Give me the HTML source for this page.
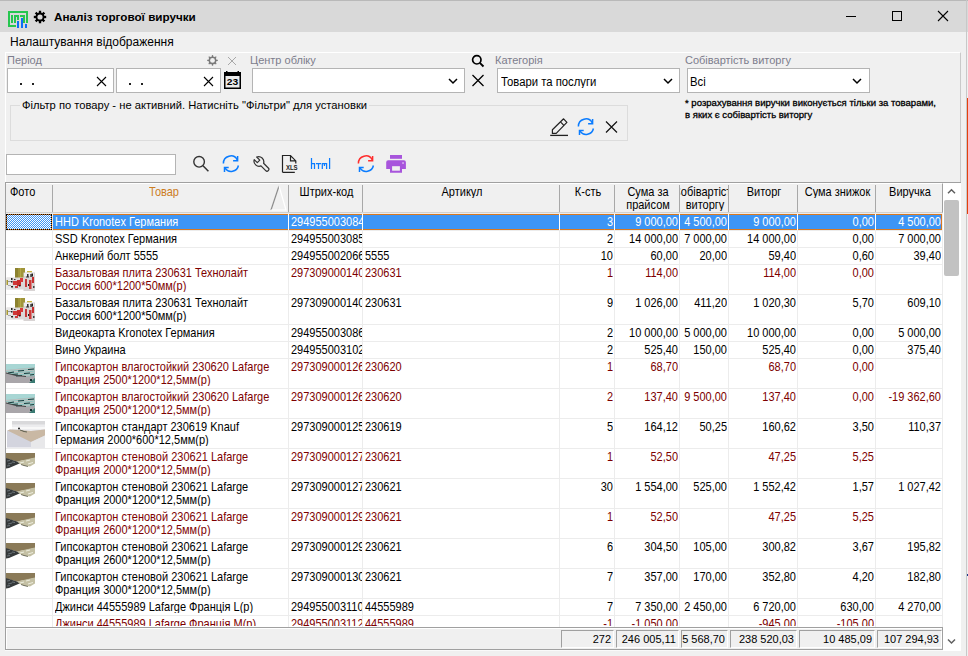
<!DOCTYPE html>
<html><head><meta charset="utf-8">
<style>
*{box-sizing:border-box;margin:0;padding:0}
html,body{width:968px;height:656px;overflow:hidden;background:#f0f0f0;font-family:"Liberation Sans",sans-serif;color:#000;position:relative}
.a{position:absolute}
.t{position:absolute;white-space:nowrap}
#title{left:0;top:0;width:968px;height:32px;background:#d9d9d9;border-top:1px solid #b9b9b9}
.lbl{font-size:11px;color:#7d7d8c}
.inp{position:absolute;background:#fff;border:1px solid #b4b4b4}
.g{font-size:11px;line-height:13px}
.c{position:absolute;overflow:hidden;white-space:nowrap;font-size:11px;line-height:13px}
.rt{text-align:right}
.red{color:#8b0000}
</style></head><body>

<div id="title" class="a"></div>
<div class="t" style="left:54px;top:10px;font-weight:bold;font-size:11.7px">Аналіз торгової виручки</div>
<div class="t" style="left:10px;top:35px;font-size:12px">Налаштування відображення</div>
<div class="a" style="left:5px;top:52px;width:956px;height:131px;border-left:1px solid #fff;border-top:1px solid #fff;border-right:1px solid #c9c9c9"></div>
<div class="t lbl" style="left:7px;top:54px">Період</div>
<div class="inp" style="left:7px;top:68px;width:107px;height:25px"></div>
<div class="inp" style="left:116px;top:68px;width:105px;height:25px"></div>
<div class="t lbl" style="left:250px;top:54px">Центр обліку</div>
<div class="inp" style="left:252px;top:68px;width:213px;height:25px"></div>
<div class="t lbl" style="left:495px;top:54px">Категорія</div>
<div class="inp" style="left:497px;top:68px;width:183px;height:25px"></div>
<div class="t" style="left:501px;top:75px;font-size:11.3px;transform:scaleY(1.08);transform-origin:0 0">Товари та послуги</div>
<div class="t lbl" style="left:685px;top:54px">Собівартість виторгу</div>
<div class="inp" style="left:687px;top:68px;width:183px;height:25px"></div>
<div class="t" style="left:690px;top:75px;font-size:11.3px;transform:scaleY(1.08);transform-origin:0 0">Всі</div>
<div class="t" style="left:685px;top:97px;font-size:9.55px;line-height:12px;color:#000;-webkit-text-stroke:0.3px #000">* розрахування виручки виконується тільки за товарами,<br>в яких є собівартість виторгу</div>
<div class="a" style="left:10px;top:105px;width:618px;height:36px;border:1px solid #dcdcdc"></div>
<div class="t" style="left:20px;top:99px;font-size:11.2px;background:#f0f0f0;padding:0 2px">Фільтр по товару - не активний. Натисніть "Фільтри" для установки</div>
<div class="inp" style="left:6px;top:154px;width:170px;height:21px"></div>
<div class="a" style="left:5px;top:182px;width:956px;height:469px;background:#fff"></div>
<div class="a" style="left:5px;top:182px;width:956px;height:1px;background:#a0a0a0"></div>
<div class="a" style="left:5px;top:182px;width:1px;height:468px;background:#a0a0a0"></div>
<div class="a" style="left:6px;top:183px;width:937px;height:30px;background:#f0f0f0;border-top:1px solid #fff;border-bottom:1px solid #d0d0d0;border-right:1px solid #a0a0a0"></div>
<div class="a" style="left:52px;top:185px;width:1px;height:27px;background:#a8a8a8"></div>
<div class="a" style="left:288px;top:185px;width:1px;height:27px;background:#a8a8a8"></div>
<div class="a" style="left:362px;top:185px;width:1px;height:27px;background:#a8a8a8"></div>
<div class="a" style="left:559px;top:185px;width:1px;height:27px;background:#a8a8a8"></div>
<div class="a" style="left:614px;top:185px;width:1px;height:27px;background:#a8a8a8"></div>
<div class="a" style="left:679px;top:185px;width:1px;height:27px;background:#a8a8a8"></div>
<div class="a" style="left:728px;top:185px;width:1px;height:27px;background:#a8a8a8"></div>
<div class="a" style="left:797px;top:185px;width:1px;height:27px;background:#a8a8a8"></div>
<div class="a" style="left:875px;top:185px;width:1px;height:27px;background:#a8a8a8"></div>
<div class="c" style="left:6px;top:185px;width:46px;height:27px;line-height:12px;text-align:left;padding-left:4px;transform:scaleY(1.08);transform-origin:0 0">Фото</div>
<div class="c" style="left:53px;top:184px;width:220px;height:28px;line-height:12px;color:#cc7d1f"><div style="position:absolute;top:1px;left:11.0px;width:200px;text-align:center;transform:scaleY(1.08);transform-origin:0 0">Товар</div></div>
<div class="c" style="left:289px;top:184px;width:73px;height:28px;line-height:12px"><div style="position:absolute;top:1px;left:-62.5px;width:200px;text-align:center;transform:scaleY(1.08);transform-origin:0 0">Штрих-код</div></div>
<div class="c" style="left:363px;top:184px;width:196px;height:28px;line-height:12px"><div style="position:absolute;top:1px;left:-1.0px;width:200px;text-align:center;transform:scaleY(1.08);transform-origin:0 0">Артикул</div></div>
<div class="c" style="left:560px;top:184px;width:54px;height:28px;line-height:12px"><div style="position:absolute;top:1px;left:-72.0px;width:200px;text-align:center;transform:scaleY(1.08);transform-origin:0 0">К-сть</div></div>
<div class="c" style="left:615px;top:184px;width:64px;height:28px;line-height:12px"><div style="position:absolute;top:1px;left:-67.0px;width:200px;text-align:center;transform:scaleY(1.08);transform-origin:0 0">Сума за<br>прайсом</div></div>
<div class="c" style="left:680px;top:184px;width:48px;height:28px;line-height:12px"><div style="position:absolute;top:1px;left:-75.0px;width:200px;text-align:center;transform:scaleY(1.08);transform-origin:0 0">Собівартість<br>виторгу</div></div>
<div class="c" style="left:729px;top:184px;width:68px;height:28px;line-height:12px"><div style="position:absolute;top:1px;left:-65.0px;width:200px;text-align:center;transform:scaleY(1.08);transform-origin:0 0">Виторг</div></div>
<div class="c" style="left:798px;top:184px;width:77px;height:28px;line-height:12px"><div style="position:absolute;top:1px;left:-60.5px;width:200px;text-align:center;transform:scaleY(1.08);transform-origin:0 0">Сума знижок</div></div>
<div class="c" style="left:876px;top:184px;width:66px;height:28px;line-height:12px"><div style="position:absolute;top:1px;left:-66.0px;width:200px;text-align:center;transform:scaleY(1.08);transform-origin:0 0">Виручка</div></div>
<svg class="a" style="left:268px;top:184px" width="20" height="28"><path d="M3 26 L11 2" stroke="#8c8c8c" stroke-width="1.2" fill="none"/><path d="M11 2 L18 26 L3 26" stroke="#fff" stroke-width="1.2" fill="none"/></svg>
<div class="a" style="left:52px;top:213px;width:1px;height:414px;background:#ececec"></div>
<div class="a" style="left:288px;top:213px;width:1px;height:414px;background:#ececec"></div>
<div class="a" style="left:362px;top:213px;width:1px;height:414px;background:#ececec"></div>
<div class="a" style="left:559px;top:213px;width:1px;height:414px;background:#ececec"></div>
<div class="a" style="left:614px;top:213px;width:1px;height:414px;background:#ececec"></div>
<div class="a" style="left:679px;top:213px;width:1px;height:414px;background:#ececec"></div>
<div class="a" style="left:728px;top:213px;width:1px;height:414px;background:#ececec"></div>
<div class="a" style="left:797px;top:213px;width:1px;height:414px;background:#ececec"></div>
<div class="a" style="left:875px;top:213px;width:1px;height:414px;background:#ececec"></div>
<div class="a" style="left:942px;top:213px;width:1px;height:414px;background:#ececec"></div>
<div class="a" style="left:6px;top:213px;width:936px;height:1px;background:#ececec"></div>
<div class="a" style="left:53px;top:214px;width:889px;height:16px;background:#3d95f5;border-top:1px solid #d9781e;border-bottom:1px solid #d9781e;border-right:1px solid #d9781e"></div>
<div class="a" style="left:288px;top:214px;width:1px;height:16px;background:#fff"></div>
<div class="a" style="left:362px;top:214px;width:1px;height:16px;background:#fff"></div>
<div class="a" style="left:559px;top:214px;width:1px;height:16px;background:#fff"></div>
<div class="a" style="left:614px;top:214px;width:1px;height:16px;background:#fff"></div>
<div class="a" style="left:679px;top:214px;width:1px;height:16px;background:#fff"></div>
<div class="a" style="left:728px;top:214px;width:1px;height:16px;background:#fff"></div>
<div class="a" style="left:797px;top:214px;width:1px;height:16px;background:#fff"></div>
<div class="a" style="left:875px;top:214px;width:1px;height:16px;background:#fff"></div>
<div class="a" style="left:6px;top:214px;width:46px;height:16px;background:#d9781e"></div>
<div class="a" style="left:6px;top:214px;width:46px;height:16px;border:1px dotted #000;background:repeating-conic-gradient(#3d95f5 0 25%,#fff 0 50%) 0 0/2px 2px;background-clip:padding-box"></div>
<div class="c " style="left:53px;top:214px;width:235px;height:15px;color:#fff"><div style="position:absolute;left:0;right:0;top:1.3px;line-height:12px;transform:scaleY(1.08);transform-origin:0 0;padding-left:2px">HHD Kronotex Германия</div></div>
<div class="c " style="left:289px;top:214px;width:73px;height:15px;color:#fff"><div style="position:absolute;left:0;right:0;top:1.3px;line-height:12px;transform:scaleY(1.08);transform-origin:0 0;padding-left:2px">294955003084</div></div>
<div class="c rt" style="left:560px;top:214px;width:54px;height:15px;color:#fff"><div style="position:absolute;left:0;right:0;top:1.3px;line-height:12px;transform:scaleY(1.08);transform-origin:0 0;padding-right:1px">3</div></div>
<div class="c rt" style="left:615px;top:214px;width:64px;height:15px;color:#fff"><div style="position:absolute;left:0;right:0;top:1.3px;line-height:12px;transform:scaleY(1.08);transform-origin:0 0;padding-right:1px">9 000,00</div></div>
<div class="c rt" style="left:680px;top:214px;width:48px;height:15px;color:#fff"><div style="position:absolute;left:0;right:0;top:1.3px;line-height:12px;transform:scaleY(1.08);transform-origin:0 0;padding-right:1px">4 500,00</div></div>
<div class="c rt" style="left:729px;top:214px;width:68px;height:15px;color:#fff"><div style="position:absolute;left:0;right:0;top:1.3px;line-height:12px;transform:scaleY(1.08);transform-origin:0 0;padding-right:1px">9 000,00</div></div>
<div class="c rt" style="left:798px;top:214px;width:77px;height:15px;color:#fff"><div style="position:absolute;left:0;right:0;top:1.3px;line-height:12px;transform:scaleY(1.08);transform-origin:0 0;padding-right:1px">0,00</div></div>
<div class="c rt" style="left:876px;top:214px;width:66px;height:15px;color:#fff"><div style="position:absolute;left:0;right:0;top:1.3px;line-height:12px;transform:scaleY(1.08);transform-origin:0 0;padding-right:1px">4 500,00</div></div>
<div class="a" style="left:6px;top:230px;width:936px;height:1px;background:#ececec"></div>
<div class="c " style="left:53px;top:231px;width:235px;height:15px;color:#000"><div style="position:absolute;left:0;right:0;top:1.3px;line-height:12px;transform:scaleY(1.08);transform-origin:0 0;padding-left:2px">SSD Kronotex Германия</div></div>
<div class="c " style="left:289px;top:231px;width:73px;height:15px;color:#000"><div style="position:absolute;left:0;right:0;top:1.3px;line-height:12px;transform:scaleY(1.08);transform-origin:0 0;padding-left:2px">294955003085</div></div>
<div class="c rt" style="left:560px;top:231px;width:54px;height:15px;color:#000"><div style="position:absolute;left:0;right:0;top:1.3px;line-height:12px;transform:scaleY(1.08);transform-origin:0 0;padding-right:1px">2</div></div>
<div class="c rt" style="left:615px;top:231px;width:64px;height:15px;color:#000"><div style="position:absolute;left:0;right:0;top:1.3px;line-height:12px;transform:scaleY(1.08);transform-origin:0 0;padding-right:1px">14 000,00</div></div>
<div class="c rt" style="left:680px;top:231px;width:48px;height:15px;color:#000"><div style="position:absolute;left:0;right:0;top:1.3px;line-height:12px;transform:scaleY(1.08);transform-origin:0 0;padding-right:1px">7 000,00</div></div>
<div class="c rt" style="left:729px;top:231px;width:68px;height:15px;color:#000"><div style="position:absolute;left:0;right:0;top:1.3px;line-height:12px;transform:scaleY(1.08);transform-origin:0 0;padding-right:1px">14 000,00</div></div>
<div class="c rt" style="left:798px;top:231px;width:77px;height:15px;color:#000"><div style="position:absolute;left:0;right:0;top:1.3px;line-height:12px;transform:scaleY(1.08);transform-origin:0 0;padding-right:1px">0,00</div></div>
<div class="c rt" style="left:876px;top:231px;width:66px;height:15px;color:#000"><div style="position:absolute;left:0;right:0;top:1.3px;line-height:12px;transform:scaleY(1.08);transform-origin:0 0;padding-right:1px">7 000,00</div></div>
<div class="a" style="left:6px;top:247px;width:936px;height:1px;background:#ececec"></div>
<div class="c " style="left:53px;top:248px;width:235px;height:15px;color:#000"><div style="position:absolute;left:0;right:0;top:1.3px;line-height:12px;transform:scaleY(1.08);transform-origin:0 0;padding-left:2px">Анкерний болт 5555</div></div>
<div class="c " style="left:289px;top:248px;width:73px;height:15px;color:#000"><div style="position:absolute;left:0;right:0;top:1.3px;line-height:12px;transform:scaleY(1.08);transform-origin:0 0;padding-left:2px">294955002066</div></div>
<div class="c " style="left:363px;top:248px;width:196px;height:15px;color:#000"><div style="position:absolute;left:0;right:0;top:1.3px;line-height:12px;transform:scaleY(1.08);transform-origin:0 0;padding-left:2px">5555</div></div>
<div class="c rt" style="left:560px;top:248px;width:54px;height:15px;color:#000"><div style="position:absolute;left:0;right:0;top:1.3px;line-height:12px;transform:scaleY(1.08);transform-origin:0 0;padding-right:1px">10</div></div>
<div class="c rt" style="left:615px;top:248px;width:64px;height:15px;color:#000"><div style="position:absolute;left:0;right:0;top:1.3px;line-height:12px;transform:scaleY(1.08);transform-origin:0 0;padding-right:1px">60,00</div></div>
<div class="c rt" style="left:680px;top:248px;width:48px;height:15px;color:#000"><div style="position:absolute;left:0;right:0;top:1.3px;line-height:12px;transform:scaleY(1.08);transform-origin:0 0;padding-right:1px">20,00</div></div>
<div class="c rt" style="left:729px;top:248px;width:68px;height:15px;color:#000"><div style="position:absolute;left:0;right:0;top:1.3px;line-height:12px;transform:scaleY(1.08);transform-origin:0 0;padding-right:1px">59,40</div></div>
<div class="c rt" style="left:798px;top:248px;width:77px;height:15px;color:#000"><div style="position:absolute;left:0;right:0;top:1.3px;line-height:12px;transform:scaleY(1.08);transform-origin:0 0;padding-right:1px">0,60</div></div>
<div class="c rt" style="left:876px;top:248px;width:66px;height:15px;color:#000"><div style="position:absolute;left:0;right:0;top:1.3px;line-height:12px;transform:scaleY(1.08);transform-origin:0 0;padding-right:1px">39,40</div></div>
<div class="a" style="left:6px;top:264px;width:936px;height:1px;background:#ececec"></div>
<div class="c " style="left:53px;top:265px;width:235px;height:28px;color:#7d0000"><div style="position:absolute;left:0;right:0;top:1.3px;line-height:12px;transform:scaleY(1.08);transform-origin:0 0;padding-left:2px">Базальтовая плита 230631 Технолайт<br>Россия 600*1200*50мм(р)</div></div>
<div class="c " style="left:289px;top:265px;width:73px;height:28px;color:#7d0000"><div style="position:absolute;left:0;right:0;top:1.3px;line-height:12px;transform:scaleY(1.08);transform-origin:0 0;padding-left:2px">297309000140</div></div>
<div class="c " style="left:363px;top:265px;width:196px;height:28px;color:#7d0000"><div style="position:absolute;left:0;right:0;top:1.3px;line-height:12px;transform:scaleY(1.08);transform-origin:0 0;padding-left:2px">230631</div></div>
<div class="c rt" style="left:560px;top:265px;width:54px;height:28px;color:#7d0000"><div style="position:absolute;left:0;right:0;top:1.3px;line-height:12px;transform:scaleY(1.08);transform-origin:0 0;padding-right:1px">1</div></div>
<div class="c rt" style="left:615px;top:265px;width:64px;height:28px;color:#7d0000"><div style="position:absolute;left:0;right:0;top:1.3px;line-height:12px;transform:scaleY(1.08);transform-origin:0 0;padding-right:1px">114,00</div></div>
<div class="c rt" style="left:729px;top:265px;width:68px;height:28px;color:#7d0000"><div style="position:absolute;left:0;right:0;top:1.3px;line-height:12px;transform:scaleY(1.08);transform-origin:0 0;padding-right:1px">114,00</div></div>
<div class="c rt" style="left:798px;top:265px;width:77px;height:28px;color:#7d0000"><div style="position:absolute;left:0;right:0;top:1.3px;line-height:12px;transform:scaleY(1.08);transform-origin:0 0;padding-right:1px">0,00</div></div>
<div class="a" style="left:6px;top:294px;width:936px;height:1px;background:#ececec"></div>
<div class="c " style="left:53px;top:295px;width:235px;height:28px;color:#000"><div style="position:absolute;left:0;right:0;top:1.3px;line-height:12px;transform:scaleY(1.08);transform-origin:0 0;padding-left:2px">Базальтовая плита 230631 Технолайт<br>Россия 600*1200*50мм(р)</div></div>
<div class="c " style="left:289px;top:295px;width:73px;height:28px;color:#000"><div style="position:absolute;left:0;right:0;top:1.3px;line-height:12px;transform:scaleY(1.08);transform-origin:0 0;padding-left:2px">297309000140</div></div>
<div class="c " style="left:363px;top:295px;width:196px;height:28px;color:#000"><div style="position:absolute;left:0;right:0;top:1.3px;line-height:12px;transform:scaleY(1.08);transform-origin:0 0;padding-left:2px">230631</div></div>
<div class="c rt" style="left:560px;top:295px;width:54px;height:28px;color:#000"><div style="position:absolute;left:0;right:0;top:1.3px;line-height:12px;transform:scaleY(1.08);transform-origin:0 0;padding-right:1px">9</div></div>
<div class="c rt" style="left:615px;top:295px;width:64px;height:28px;color:#000"><div style="position:absolute;left:0;right:0;top:1.3px;line-height:12px;transform:scaleY(1.08);transform-origin:0 0;padding-right:1px">1 026,00</div></div>
<div class="c rt" style="left:680px;top:295px;width:48px;height:28px;color:#000"><div style="position:absolute;left:0;right:0;top:1.3px;line-height:12px;transform:scaleY(1.08);transform-origin:0 0;padding-right:1px">411,20</div></div>
<div class="c rt" style="left:729px;top:295px;width:68px;height:28px;color:#000"><div style="position:absolute;left:0;right:0;top:1.3px;line-height:12px;transform:scaleY(1.08);transform-origin:0 0;padding-right:1px">1 020,30</div></div>
<div class="c rt" style="left:798px;top:295px;width:77px;height:28px;color:#000"><div style="position:absolute;left:0;right:0;top:1.3px;line-height:12px;transform:scaleY(1.08);transform-origin:0 0;padding-right:1px">5,70</div></div>
<div class="c rt" style="left:876px;top:295px;width:66px;height:28px;color:#000"><div style="position:absolute;left:0;right:0;top:1.3px;line-height:12px;transform:scaleY(1.08);transform-origin:0 0;padding-right:1px">609,10</div></div>
<div class="a" style="left:6px;top:324px;width:936px;height:1px;background:#ececec"></div>
<div class="c " style="left:53px;top:325px;width:235px;height:15px;color:#000"><div style="position:absolute;left:0;right:0;top:1.3px;line-height:12px;transform:scaleY(1.08);transform-origin:0 0;padding-left:2px">Видеокарта Kronotex Германия</div></div>
<div class="c " style="left:289px;top:325px;width:73px;height:15px;color:#000"><div style="position:absolute;left:0;right:0;top:1.3px;line-height:12px;transform:scaleY(1.08);transform-origin:0 0;padding-left:2px">294955003086</div></div>
<div class="c rt" style="left:560px;top:325px;width:54px;height:15px;color:#000"><div style="position:absolute;left:0;right:0;top:1.3px;line-height:12px;transform:scaleY(1.08);transform-origin:0 0;padding-right:1px">2</div></div>
<div class="c rt" style="left:615px;top:325px;width:64px;height:15px;color:#000"><div style="position:absolute;left:0;right:0;top:1.3px;line-height:12px;transform:scaleY(1.08);transform-origin:0 0;padding-right:1px">10 000,00</div></div>
<div class="c rt" style="left:680px;top:325px;width:48px;height:15px;color:#000"><div style="position:absolute;left:0;right:0;top:1.3px;line-height:12px;transform:scaleY(1.08);transform-origin:0 0;padding-right:1px">5 000,00</div></div>
<div class="c rt" style="left:729px;top:325px;width:68px;height:15px;color:#000"><div style="position:absolute;left:0;right:0;top:1.3px;line-height:12px;transform:scaleY(1.08);transform-origin:0 0;padding-right:1px">10 000,00</div></div>
<div class="c rt" style="left:798px;top:325px;width:77px;height:15px;color:#000"><div style="position:absolute;left:0;right:0;top:1.3px;line-height:12px;transform:scaleY(1.08);transform-origin:0 0;padding-right:1px">0,00</div></div>
<div class="c rt" style="left:876px;top:325px;width:66px;height:15px;color:#000"><div style="position:absolute;left:0;right:0;top:1.3px;line-height:12px;transform:scaleY(1.08);transform-origin:0 0;padding-right:1px">5 000,00</div></div>
<div class="a" style="left:6px;top:341px;width:936px;height:1px;background:#ececec"></div>
<div class="c " style="left:53px;top:342px;width:235px;height:15px;color:#000"><div style="position:absolute;left:0;right:0;top:1.3px;line-height:12px;transform:scaleY(1.08);transform-origin:0 0;padding-left:2px">Вино Украина</div></div>
<div class="c " style="left:289px;top:342px;width:73px;height:15px;color:#000"><div style="position:absolute;left:0;right:0;top:1.3px;line-height:12px;transform:scaleY(1.08);transform-origin:0 0;padding-left:2px">294955003102</div></div>
<div class="c rt" style="left:560px;top:342px;width:54px;height:15px;color:#000"><div style="position:absolute;left:0;right:0;top:1.3px;line-height:12px;transform:scaleY(1.08);transform-origin:0 0;padding-right:1px">2</div></div>
<div class="c rt" style="left:615px;top:342px;width:64px;height:15px;color:#000"><div style="position:absolute;left:0;right:0;top:1.3px;line-height:12px;transform:scaleY(1.08);transform-origin:0 0;padding-right:1px">525,40</div></div>
<div class="c rt" style="left:680px;top:342px;width:48px;height:15px;color:#000"><div style="position:absolute;left:0;right:0;top:1.3px;line-height:12px;transform:scaleY(1.08);transform-origin:0 0;padding-right:1px">150,00</div></div>
<div class="c rt" style="left:729px;top:342px;width:68px;height:15px;color:#000"><div style="position:absolute;left:0;right:0;top:1.3px;line-height:12px;transform:scaleY(1.08);transform-origin:0 0;padding-right:1px">525,40</div></div>
<div class="c rt" style="left:798px;top:342px;width:77px;height:15px;color:#000"><div style="position:absolute;left:0;right:0;top:1.3px;line-height:12px;transform:scaleY(1.08);transform-origin:0 0;padding-right:1px">0,00</div></div>
<div class="c rt" style="left:876px;top:342px;width:66px;height:15px;color:#000"><div style="position:absolute;left:0;right:0;top:1.3px;line-height:12px;transform:scaleY(1.08);transform-origin:0 0;padding-right:1px">375,40</div></div>
<div class="a" style="left:6px;top:358px;width:936px;height:1px;background:#ececec"></div>
<div class="c " style="left:53px;top:359px;width:235px;height:28px;color:#7d0000"><div style="position:absolute;left:0;right:0;top:1.3px;line-height:12px;transform:scaleY(1.08);transform-origin:0 0;padding-left:2px">Гипсокартон влагостойкий 230620 Lafarge<br>Франция 2500*1200*12,5мм(р)</div></div>
<div class="c " style="left:289px;top:359px;width:73px;height:28px;color:#7d0000"><div style="position:absolute;left:0;right:0;top:1.3px;line-height:12px;transform:scaleY(1.08);transform-origin:0 0;padding-left:2px">297309000126</div></div>
<div class="c " style="left:363px;top:359px;width:196px;height:28px;color:#7d0000"><div style="position:absolute;left:0;right:0;top:1.3px;line-height:12px;transform:scaleY(1.08);transform-origin:0 0;padding-left:2px">230620</div></div>
<div class="c rt" style="left:560px;top:359px;width:54px;height:28px;color:#7d0000"><div style="position:absolute;left:0;right:0;top:1.3px;line-height:12px;transform:scaleY(1.08);transform-origin:0 0;padding-right:1px">1</div></div>
<div class="c rt" style="left:615px;top:359px;width:64px;height:28px;color:#7d0000"><div style="position:absolute;left:0;right:0;top:1.3px;line-height:12px;transform:scaleY(1.08);transform-origin:0 0;padding-right:1px">68,70</div></div>
<div class="c rt" style="left:729px;top:359px;width:68px;height:28px;color:#7d0000"><div style="position:absolute;left:0;right:0;top:1.3px;line-height:12px;transform:scaleY(1.08);transform-origin:0 0;padding-right:1px">68,70</div></div>
<div class="c rt" style="left:798px;top:359px;width:77px;height:28px;color:#7d0000"><div style="position:absolute;left:0;right:0;top:1.3px;line-height:12px;transform:scaleY(1.08);transform-origin:0 0;padding-right:1px">0,00</div></div>
<div class="a" style="left:6px;top:388px;width:936px;height:1px;background:#ececec"></div>
<div class="c " style="left:53px;top:389px;width:235px;height:28px;color:#7d0000"><div style="position:absolute;left:0;right:0;top:1.3px;line-height:12px;transform:scaleY(1.08);transform-origin:0 0;padding-left:2px">Гипсокартон влагостойкий 230620 Lafarge<br>Франция 2500*1200*12,5мм(р)</div></div>
<div class="c " style="left:289px;top:389px;width:73px;height:28px;color:#7d0000"><div style="position:absolute;left:0;right:0;top:1.3px;line-height:12px;transform:scaleY(1.08);transform-origin:0 0;padding-left:2px">297309000126</div></div>
<div class="c " style="left:363px;top:389px;width:196px;height:28px;color:#7d0000"><div style="position:absolute;left:0;right:0;top:1.3px;line-height:12px;transform:scaleY(1.08);transform-origin:0 0;padding-left:2px">230620</div></div>
<div class="c rt" style="left:560px;top:389px;width:54px;height:28px;color:#7d0000"><div style="position:absolute;left:0;right:0;top:1.3px;line-height:12px;transform:scaleY(1.08);transform-origin:0 0;padding-right:1px">2</div></div>
<div class="c rt" style="left:615px;top:389px;width:64px;height:28px;color:#7d0000"><div style="position:absolute;left:0;right:0;top:1.3px;line-height:12px;transform:scaleY(1.08);transform-origin:0 0;padding-right:1px">137,40</div></div>
<div class="c rt" style="left:680px;top:389px;width:48px;height:28px;color:#7d0000"><div style="position:absolute;left:0;right:0;top:1.3px;line-height:12px;transform:scaleY(1.08);transform-origin:0 0;padding-right:1px">9 500,00</div></div>
<div class="c rt" style="left:729px;top:389px;width:68px;height:28px;color:#7d0000"><div style="position:absolute;left:0;right:0;top:1.3px;line-height:12px;transform:scaleY(1.08);transform-origin:0 0;padding-right:1px">137,40</div></div>
<div class="c rt" style="left:798px;top:389px;width:77px;height:28px;color:#7d0000"><div style="position:absolute;left:0;right:0;top:1.3px;line-height:12px;transform:scaleY(1.08);transform-origin:0 0;padding-right:1px">0,00</div></div>
<div class="c rt" style="left:876px;top:389px;width:66px;height:28px;color:#7d0000"><div style="position:absolute;left:0;right:0;top:1.3px;line-height:12px;transform:scaleY(1.08);transform-origin:0 0;padding-right:1px">-19 362,60</div></div>
<div class="a" style="left:6px;top:418px;width:936px;height:1px;background:#ececec"></div>
<div class="c " style="left:53px;top:419px;width:235px;height:28px;color:#000"><div style="position:absolute;left:0;right:0;top:1.3px;line-height:12px;transform:scaleY(1.08);transform-origin:0 0;padding-left:2px">Гипсокартон стандарт 230619 Knauf<br>Германия 2000*600*12,5мм(р)</div></div>
<div class="c " style="left:289px;top:419px;width:73px;height:28px;color:#000"><div style="position:absolute;left:0;right:0;top:1.3px;line-height:12px;transform:scaleY(1.08);transform-origin:0 0;padding-left:2px">297309000125</div></div>
<div class="c " style="left:363px;top:419px;width:196px;height:28px;color:#000"><div style="position:absolute;left:0;right:0;top:1.3px;line-height:12px;transform:scaleY(1.08);transform-origin:0 0;padding-left:2px">230619</div></div>
<div class="c rt" style="left:560px;top:419px;width:54px;height:28px;color:#000"><div style="position:absolute;left:0;right:0;top:1.3px;line-height:12px;transform:scaleY(1.08);transform-origin:0 0;padding-right:1px">5</div></div>
<div class="c rt" style="left:615px;top:419px;width:64px;height:28px;color:#000"><div style="position:absolute;left:0;right:0;top:1.3px;line-height:12px;transform:scaleY(1.08);transform-origin:0 0;padding-right:1px">164,12</div></div>
<div class="c rt" style="left:680px;top:419px;width:48px;height:28px;color:#000"><div style="position:absolute;left:0;right:0;top:1.3px;line-height:12px;transform:scaleY(1.08);transform-origin:0 0;padding-right:1px">50,25</div></div>
<div class="c rt" style="left:729px;top:419px;width:68px;height:28px;color:#000"><div style="position:absolute;left:0;right:0;top:1.3px;line-height:12px;transform:scaleY(1.08);transform-origin:0 0;padding-right:1px">160,62</div></div>
<div class="c rt" style="left:798px;top:419px;width:77px;height:28px;color:#000"><div style="position:absolute;left:0;right:0;top:1.3px;line-height:12px;transform:scaleY(1.08);transform-origin:0 0;padding-right:1px">3,50</div></div>
<div class="c rt" style="left:876px;top:419px;width:66px;height:28px;color:#000"><div style="position:absolute;left:0;right:0;top:1.3px;line-height:12px;transform:scaleY(1.08);transform-origin:0 0;padding-right:1px">110,37</div></div>
<div class="a" style="left:6px;top:448px;width:936px;height:1px;background:#ececec"></div>
<div class="c " style="left:53px;top:449px;width:235px;height:28px;color:#7d0000"><div style="position:absolute;left:0;right:0;top:1.3px;line-height:12px;transform:scaleY(1.08);transform-origin:0 0;padding-left:2px">Гипсокартон стеновой 230621 Lafarge<br>Франция 2000*1200*12,5мм(р)</div></div>
<div class="c " style="left:289px;top:449px;width:73px;height:28px;color:#7d0000"><div style="position:absolute;left:0;right:0;top:1.3px;line-height:12px;transform:scaleY(1.08);transform-origin:0 0;padding-left:2px">297309000127</div></div>
<div class="c " style="left:363px;top:449px;width:196px;height:28px;color:#7d0000"><div style="position:absolute;left:0;right:0;top:1.3px;line-height:12px;transform:scaleY(1.08);transform-origin:0 0;padding-left:2px">230621</div></div>
<div class="c rt" style="left:560px;top:449px;width:54px;height:28px;color:#7d0000"><div style="position:absolute;left:0;right:0;top:1.3px;line-height:12px;transform:scaleY(1.08);transform-origin:0 0;padding-right:1px">1</div></div>
<div class="c rt" style="left:615px;top:449px;width:64px;height:28px;color:#7d0000"><div style="position:absolute;left:0;right:0;top:1.3px;line-height:12px;transform:scaleY(1.08);transform-origin:0 0;padding-right:1px">52,50</div></div>
<div class="c rt" style="left:729px;top:449px;width:68px;height:28px;color:#7d0000"><div style="position:absolute;left:0;right:0;top:1.3px;line-height:12px;transform:scaleY(1.08);transform-origin:0 0;padding-right:1px">47,25</div></div>
<div class="c rt" style="left:798px;top:449px;width:77px;height:28px;color:#7d0000"><div style="position:absolute;left:0;right:0;top:1.3px;line-height:12px;transform:scaleY(1.08);transform-origin:0 0;padding-right:1px">5,25</div></div>
<div class="a" style="left:6px;top:478px;width:936px;height:1px;background:#ececec"></div>
<div class="c " style="left:53px;top:479px;width:235px;height:28px;color:#000"><div style="position:absolute;left:0;right:0;top:1.3px;line-height:12px;transform:scaleY(1.08);transform-origin:0 0;padding-left:2px">Гипсокартон стеновой 230621 Lafarge<br>Франция 2000*1200*12,5мм(р)</div></div>
<div class="c " style="left:289px;top:479px;width:73px;height:28px;color:#000"><div style="position:absolute;left:0;right:0;top:1.3px;line-height:12px;transform:scaleY(1.08);transform-origin:0 0;padding-left:2px">297309000127</div></div>
<div class="c " style="left:363px;top:479px;width:196px;height:28px;color:#000"><div style="position:absolute;left:0;right:0;top:1.3px;line-height:12px;transform:scaleY(1.08);transform-origin:0 0;padding-left:2px">230621</div></div>
<div class="c rt" style="left:560px;top:479px;width:54px;height:28px;color:#000"><div style="position:absolute;left:0;right:0;top:1.3px;line-height:12px;transform:scaleY(1.08);transform-origin:0 0;padding-right:1px">30</div></div>
<div class="c rt" style="left:615px;top:479px;width:64px;height:28px;color:#000"><div style="position:absolute;left:0;right:0;top:1.3px;line-height:12px;transform:scaleY(1.08);transform-origin:0 0;padding-right:1px">1 554,00</div></div>
<div class="c rt" style="left:680px;top:479px;width:48px;height:28px;color:#000"><div style="position:absolute;left:0;right:0;top:1.3px;line-height:12px;transform:scaleY(1.08);transform-origin:0 0;padding-right:1px">525,00</div></div>
<div class="c rt" style="left:729px;top:479px;width:68px;height:28px;color:#000"><div style="position:absolute;left:0;right:0;top:1.3px;line-height:12px;transform:scaleY(1.08);transform-origin:0 0;padding-right:1px">1 552,42</div></div>
<div class="c rt" style="left:798px;top:479px;width:77px;height:28px;color:#000"><div style="position:absolute;left:0;right:0;top:1.3px;line-height:12px;transform:scaleY(1.08);transform-origin:0 0;padding-right:1px">1,57</div></div>
<div class="c rt" style="left:876px;top:479px;width:66px;height:28px;color:#000"><div style="position:absolute;left:0;right:0;top:1.3px;line-height:12px;transform:scaleY(1.08);transform-origin:0 0;padding-right:1px">1 027,42</div></div>
<div class="a" style="left:6px;top:508px;width:936px;height:1px;background:#ececec"></div>
<div class="c " style="left:53px;top:509px;width:235px;height:28px;color:#7d0000"><div style="position:absolute;left:0;right:0;top:1.3px;line-height:12px;transform:scaleY(1.08);transform-origin:0 0;padding-left:2px">Гипсокартон стеновой 230621 Lafarge<br>Франция 2600*1200*12,5мм(р)</div></div>
<div class="c " style="left:289px;top:509px;width:73px;height:28px;color:#7d0000"><div style="position:absolute;left:0;right:0;top:1.3px;line-height:12px;transform:scaleY(1.08);transform-origin:0 0;padding-left:2px">297309000129</div></div>
<div class="c " style="left:363px;top:509px;width:196px;height:28px;color:#7d0000"><div style="position:absolute;left:0;right:0;top:1.3px;line-height:12px;transform:scaleY(1.08);transform-origin:0 0;padding-left:2px">230621</div></div>
<div class="c rt" style="left:560px;top:509px;width:54px;height:28px;color:#7d0000"><div style="position:absolute;left:0;right:0;top:1.3px;line-height:12px;transform:scaleY(1.08);transform-origin:0 0;padding-right:1px">1</div></div>
<div class="c rt" style="left:615px;top:509px;width:64px;height:28px;color:#7d0000"><div style="position:absolute;left:0;right:0;top:1.3px;line-height:12px;transform:scaleY(1.08);transform-origin:0 0;padding-right:1px">52,50</div></div>
<div class="c rt" style="left:729px;top:509px;width:68px;height:28px;color:#7d0000"><div style="position:absolute;left:0;right:0;top:1.3px;line-height:12px;transform:scaleY(1.08);transform-origin:0 0;padding-right:1px">47,25</div></div>
<div class="c rt" style="left:798px;top:509px;width:77px;height:28px;color:#7d0000"><div style="position:absolute;left:0;right:0;top:1.3px;line-height:12px;transform:scaleY(1.08);transform-origin:0 0;padding-right:1px">5,25</div></div>
<div class="a" style="left:6px;top:538px;width:936px;height:1px;background:#ececec"></div>
<div class="c " style="left:53px;top:539px;width:235px;height:28px;color:#000"><div style="position:absolute;left:0;right:0;top:1.3px;line-height:12px;transform:scaleY(1.08);transform-origin:0 0;padding-left:2px">Гипсокартон стеновой 230621 Lafarge<br>Франция 2600*1200*12,5мм(р)</div></div>
<div class="c " style="left:289px;top:539px;width:73px;height:28px;color:#000"><div style="position:absolute;left:0;right:0;top:1.3px;line-height:12px;transform:scaleY(1.08);transform-origin:0 0;padding-left:2px">297309000129</div></div>
<div class="c " style="left:363px;top:539px;width:196px;height:28px;color:#000"><div style="position:absolute;left:0;right:0;top:1.3px;line-height:12px;transform:scaleY(1.08);transform-origin:0 0;padding-left:2px">230621</div></div>
<div class="c rt" style="left:560px;top:539px;width:54px;height:28px;color:#000"><div style="position:absolute;left:0;right:0;top:1.3px;line-height:12px;transform:scaleY(1.08);transform-origin:0 0;padding-right:1px">6</div></div>
<div class="c rt" style="left:615px;top:539px;width:64px;height:28px;color:#000"><div style="position:absolute;left:0;right:0;top:1.3px;line-height:12px;transform:scaleY(1.08);transform-origin:0 0;padding-right:1px">304,50</div></div>
<div class="c rt" style="left:680px;top:539px;width:48px;height:28px;color:#000"><div style="position:absolute;left:0;right:0;top:1.3px;line-height:12px;transform:scaleY(1.08);transform-origin:0 0;padding-right:1px">105,00</div></div>
<div class="c rt" style="left:729px;top:539px;width:68px;height:28px;color:#000"><div style="position:absolute;left:0;right:0;top:1.3px;line-height:12px;transform:scaleY(1.08);transform-origin:0 0;padding-right:1px">300,82</div></div>
<div class="c rt" style="left:798px;top:539px;width:77px;height:28px;color:#000"><div style="position:absolute;left:0;right:0;top:1.3px;line-height:12px;transform:scaleY(1.08);transform-origin:0 0;padding-right:1px">3,67</div></div>
<div class="c rt" style="left:876px;top:539px;width:66px;height:28px;color:#000"><div style="position:absolute;left:0;right:0;top:1.3px;line-height:12px;transform:scaleY(1.08);transform-origin:0 0;padding-right:1px">195,82</div></div>
<div class="a" style="left:6px;top:568px;width:936px;height:1px;background:#ececec"></div>
<div class="c " style="left:53px;top:569px;width:235px;height:28px;color:#000"><div style="position:absolute;left:0;right:0;top:1.3px;line-height:12px;transform:scaleY(1.08);transform-origin:0 0;padding-left:2px">Гипсокартон стеновой 230621 Lafarge<br>Франция 3000*1200*12,5мм(р)</div></div>
<div class="c " style="left:289px;top:569px;width:73px;height:28px;color:#000"><div style="position:absolute;left:0;right:0;top:1.3px;line-height:12px;transform:scaleY(1.08);transform-origin:0 0;padding-left:2px">297309000130</div></div>
<div class="c " style="left:363px;top:569px;width:196px;height:28px;color:#000"><div style="position:absolute;left:0;right:0;top:1.3px;line-height:12px;transform:scaleY(1.08);transform-origin:0 0;padding-left:2px">230621</div></div>
<div class="c rt" style="left:560px;top:569px;width:54px;height:28px;color:#000"><div style="position:absolute;left:0;right:0;top:1.3px;line-height:12px;transform:scaleY(1.08);transform-origin:0 0;padding-right:1px">7</div></div>
<div class="c rt" style="left:615px;top:569px;width:64px;height:28px;color:#000"><div style="position:absolute;left:0;right:0;top:1.3px;line-height:12px;transform:scaleY(1.08);transform-origin:0 0;padding-right:1px">357,00</div></div>
<div class="c rt" style="left:680px;top:569px;width:48px;height:28px;color:#000"><div style="position:absolute;left:0;right:0;top:1.3px;line-height:12px;transform:scaleY(1.08);transform-origin:0 0;padding-right:1px">170,00</div></div>
<div class="c rt" style="left:729px;top:569px;width:68px;height:28px;color:#000"><div style="position:absolute;left:0;right:0;top:1.3px;line-height:12px;transform:scaleY(1.08);transform-origin:0 0;padding-right:1px">352,80</div></div>
<div class="c rt" style="left:798px;top:569px;width:77px;height:28px;color:#000"><div style="position:absolute;left:0;right:0;top:1.3px;line-height:12px;transform:scaleY(1.08);transform-origin:0 0;padding-right:1px">4,20</div></div>
<div class="c rt" style="left:876px;top:569px;width:66px;height:28px;color:#000"><div style="position:absolute;left:0;right:0;top:1.3px;line-height:12px;transform:scaleY(1.08);transform-origin:0 0;padding-right:1px">182,80</div></div>
<div class="a" style="left:6px;top:598px;width:936px;height:1px;background:#ececec"></div>
<div class="c " style="left:53px;top:599px;width:235px;height:15px;color:#000"><div style="position:absolute;left:0;right:0;top:1.3px;line-height:12px;transform:scaleY(1.08);transform-origin:0 0;padding-left:2px">Джинси 44555989 Lafarge Франція L(р)</div></div>
<div class="c " style="left:289px;top:599px;width:73px;height:15px;color:#000"><div style="position:absolute;left:0;right:0;top:1.3px;line-height:12px;transform:scaleY(1.08);transform-origin:0 0;padding-left:2px">294955003110</div></div>
<div class="c " style="left:363px;top:599px;width:196px;height:15px;color:#000"><div style="position:absolute;left:0;right:0;top:1.3px;line-height:12px;transform:scaleY(1.08);transform-origin:0 0;padding-left:2px">44555989</div></div>
<div class="c rt" style="left:560px;top:599px;width:54px;height:15px;color:#000"><div style="position:absolute;left:0;right:0;top:1.3px;line-height:12px;transform:scaleY(1.08);transform-origin:0 0;padding-right:1px">7</div></div>
<div class="c rt" style="left:615px;top:599px;width:64px;height:15px;color:#000"><div style="position:absolute;left:0;right:0;top:1.3px;line-height:12px;transform:scaleY(1.08);transform-origin:0 0;padding-right:1px">7 350,00</div></div>
<div class="c rt" style="left:680px;top:599px;width:48px;height:15px;color:#000"><div style="position:absolute;left:0;right:0;top:1.3px;line-height:12px;transform:scaleY(1.08);transform-origin:0 0;padding-right:1px">2 450,00</div></div>
<div class="c rt" style="left:729px;top:599px;width:68px;height:15px;color:#000"><div style="position:absolute;left:0;right:0;top:1.3px;line-height:12px;transform:scaleY(1.08);transform-origin:0 0;padding-right:1px">6 720,00</div></div>
<div class="c rt" style="left:798px;top:599px;width:77px;height:15px;color:#000"><div style="position:absolute;left:0;right:0;top:1.3px;line-height:12px;transform:scaleY(1.08);transform-origin:0 0;padding-right:1px">630,00</div></div>
<div class="c rt" style="left:876px;top:599px;width:66px;height:15px;color:#000"><div style="position:absolute;left:0;right:0;top:1.3px;line-height:12px;transform:scaleY(1.08);transform-origin:0 0;padding-right:1px">4 270,00</div></div>
<div class="a" style="left:6px;top:615px;width:936px;height:1px;background:#ececec"></div>
<div class="c " style="left:53px;top:616px;width:235px;height:10px;color:#7d0000"><div style="position:absolute;left:0;right:0;top:1.3px;line-height:12px;transform:scaleY(1.08);transform-origin:0 0;padding-left:2px">Джинси 44555989 Lafarge Франція M(р)</div></div>
<div class="c " style="left:289px;top:616px;width:73px;height:10px;color:#7d0000"><div style="position:absolute;left:0;right:0;top:1.3px;line-height:12px;transform:scaleY(1.08);transform-origin:0 0;padding-left:2px">294955003112</div></div>
<div class="c " style="left:363px;top:616px;width:196px;height:10px;color:#7d0000"><div style="position:absolute;left:0;right:0;top:1.3px;line-height:12px;transform:scaleY(1.08);transform-origin:0 0;padding-left:2px">44555989</div></div>
<div class="c rt" style="left:560px;top:616px;width:54px;height:10px;color:#7d0000"><div style="position:absolute;left:0;right:0;top:1.3px;line-height:12px;transform:scaleY(1.08);transform-origin:0 0;padding-right:1px">-1</div></div>
<div class="c rt" style="left:615px;top:616px;width:64px;height:10px;color:#7d0000"><div style="position:absolute;left:0;right:0;top:1.3px;line-height:12px;transform:scaleY(1.08);transform-origin:0 0;padding-right:1px">-1 050,00</div></div>
<div class="c rt" style="left:729px;top:616px;width:68px;height:10px;color:#7d0000"><div style="position:absolute;left:0;right:0;top:1.3px;line-height:12px;transform:scaleY(1.08);transform-origin:0 0;padding-right:1px">-945,00</div></div>
<div class="c rt" style="left:798px;top:616px;width:77px;height:10px;color:#7d0000"><div style="position:absolute;left:0;right:0;top:1.3px;line-height:12px;transform:scaleY(1.08);transform-origin:0 0;padding-right:1px">-105,00</div></div>
<div class="a" style="left:6px;top:627px;width:937px;height:23px;background:#f0f0f0;border-top:1px solid #a0a0a0;border-right:1px solid #a0a0a0;border-bottom:1px solid #a0a0a0"></div>
<div class="a" style="left:6px;top:628px;width:936px;height:1px;background:#fff"></div>
<div class="a" style="left:6px;top:628px;width:1px;height:21px;background:#fff"></div>
<div class="a" style="left:5px;top:650px;width:938px;height:1px;background:#fafafa"></div>
<div class="c rt" style="left:561px;top:630px;width:53px;height:18px;border-top:1px solid #a0a0a0;border-left:1px solid #a0a0a0;border-bottom:1px solid #fff;border-right:1px solid #fff;padding-right:2px;padding-top:2px">272</div>
<div class="c rt" style="left:616px;top:630px;width:63px;height:18px;border-top:1px solid #a0a0a0;border-left:1px solid #a0a0a0;border-bottom:1px solid #fff;border-right:1px solid #fff;padding-right:2px;padding-top:2px">246 005,11</div>
<div class="c rt" style="left:681px;top:630px;width:47px;height:18px;border-top:1px solid #a0a0a0;border-left:1px solid #a0a0a0;border-bottom:1px solid #fff;border-right:1px solid #fff;padding-right:2px;padding-top:2px">5 568,70</div>
<div class="c rt" style="left:730px;top:630px;width:67px;height:18px;border-top:1px solid #a0a0a0;border-left:1px solid #a0a0a0;border-bottom:1px solid #fff;border-right:1px solid #fff;padding-right:2px;padding-top:2px">238 520,03</div>
<div class="c rt" style="left:799px;top:630px;width:76px;height:18px;border-top:1px solid #a0a0a0;border-left:1px solid #a0a0a0;border-bottom:1px solid #fff;border-right:1px solid #fff;padding-right:2px;padding-top:2px">10 485,09</div>
<div class="c rt" style="left:877px;top:630px;width:65px;height:18px;border-top:1px solid #a0a0a0;border-left:1px solid #a0a0a0;border-bottom:1px solid #fff;border-right:1px solid #fff;padding-right:2px;padding-top:2px">107 294,93</div>
<div class="a" style="left:943px;top:183px;width:18px;height:468px;background:#fff"></div>
<div class="a" style="left:944px;top:200px;width:15px;height:76px;background:#c2c2c2;border-radius:2px"></div>
<svg class="a" style="left:8px;top:11px" width="20" height="17" viewBox="0 0 20 17"><rect x="0" y="0" width="20" height="2" fill="#26c64f"/><rect x="0" y="0" width="2" height="16" fill="#26c64f"/><rect x="18" y="0" width="2" height="12" fill="#26c64f"/><rect x="0" y="14" width="8" height="2" fill="#26c64f"/><rect x="3" y="4" width="2" height="8" fill="#26c64f"/><rect x="6" y="4" width="5" height="2" fill="#26c64f"/><rect x="6" y="4" width="2" height="8" fill="#26c64f"/><rect x="9" y="4" width="2" height="5" fill="#26c64f"/><rect x="12" y="4" width="5" height="2" fill="#26c64f"/><rect x="15" y="4" width="2" height="8" fill="#26c64f"/><rect x="9" y="10" width="2" height="7" fill="#0d6ff6"/><rect x="13" y="7" width="2" height="10" fill="#0d6ff6"/><rect x="17" y="13" width="2" height="4" fill="#0d6ff6"/></svg>
<svg class="a" style="left:33px;top:10px" width="14" height="14" viewBox="0 0 14 14"><path d="M11.47 5.93 L13.18 5.77 L13.18 8.23 L11.47 8.07 L11.25 8.76 L10.92 9.40 L12.24 10.50 L10.50 12.24 L9.40 10.92 L8.76 11.25 L8.07 11.47 L8.23 13.18 L5.77 13.18 L5.93 11.47 L5.24 11.25 L4.60 10.92 L3.50 12.24 L1.76 10.50 L3.08 9.40 L2.75 8.76 L2.53 8.07 L0.82 8.23 L0.82 5.77 L2.53 5.93 L2.75 5.24 L3.08 4.60 L1.76 3.50 L3.50 1.76 L4.60 3.08 L5.24 2.75 L5.93 2.53 L5.77 0.82 L8.23 0.82 L8.07 2.53 L8.76 2.75 L9.40 3.08 L10.50 1.76 L12.24 3.50 L10.92 4.60 L11.25 5.24 Z" fill="#000"/><circle cx="7" cy="7" r="2.6" fill="#d9d9d9"/></svg>
<svg class="a" style="left:840px;top:5px" width="120" height="22" viewBox="0 0 120 22"><line x1="6" y1="11.5" x2="16" y2="11.5" stroke="#000" stroke-width="1"/><rect x="52.5" y="6.5" width="9" height="9" fill="none" stroke="#000" stroke-width="1"/><path d="M98 6 L108 16 M108 6 L98 16" stroke="#000" stroke-width="1.1"/></svg>
<svg class="a" style="left:202px;top:50px" width="20" height="20" viewBox="0 0 20 20"><circle cx="10.5" cy="10.4" r="3.2" fill="none" stroke="#7a7a7a" stroke-width="1.5"/><line x1="10.50" y1="7.20" x2="10.50" y2="5.10" stroke="#7a7a7a" stroke-width="1.3"/><line x1="12.76" y1="8.14" x2="14.25" y2="6.65" stroke="#7a7a7a" stroke-width="1.3"/><line x1="13.70" y1="10.40" x2="15.80" y2="10.40" stroke="#7a7a7a" stroke-width="1.3"/><line x1="12.76" y1="12.66" x2="14.25" y2="14.15" stroke="#7a7a7a" stroke-width="1.3"/><line x1="10.50" y1="13.60" x2="10.50" y2="15.70" stroke="#7a7a7a" stroke-width="1.3"/><line x1="8.24" y1="12.66" x2="6.75" y2="14.15" stroke="#7a7a7a" stroke-width="1.3"/><line x1="7.30" y1="10.40" x2="5.20" y2="10.40" stroke="#7a7a7a" stroke-width="1.3"/><line x1="8.24" y1="8.14" x2="6.75" y2="6.65" stroke="#7a7a7a" stroke-width="1.3"/></svg>
<svg class="a" style="left:227px;top:56px" width="10" height="10" viewBox="0 0 10 10"><path d="M1 1 L9 9 M9 1 L1 9" stroke="#a8a8a8" stroke-width="1"/></svg>
<svg class="a" style="left:96px;top:76px" width="11" height="11" viewBox="0 0 11 11"><path d="M1 1 L10 10 M10 1 L1 10" stroke="#000" stroke-width="1.1"/></svg>
<svg class="a" style="left:203px;top:76px" width="11" height="11" viewBox="0 0 11 11"><path d="M1 1 L10 10 M10 1 L1 10" stroke="#000" stroke-width="1.1"/></svg>
<div class="a" style="left:20px;top:83px;width:2px;height:2px;background:#222"></div>
<div class="a" style="left:32px;top:83px;width:2px;height:2px;background:#222"></div>
<div class="a" style="left:129px;top:83px;width:2px;height:2px;background:#222"></div>
<div class="a" style="left:141px;top:83px;width:2px;height:2px;background:#222"></div>
<svg class="a" style="left:223px;top:70px" width="19" height="20" viewBox="0 0 19 20"><rect x="1.75" y="2.75" width="15.5" height="15.5" fill="#ececec" stroke="#000" stroke-width="1.5"/><rect x="1" y="2" width="17" height="4" fill="#000"/><rect x="3" y="1" width="1.5" height="2" fill="#000"/><rect x="14.5" y="1" width="1.5" height="2" fill="#000"/><text x="3.8" y="15.3" font-family="Liberation Sans" font-weight="bold" font-size="9" fill="#000" textLength="11.4" lengthAdjust="spacingAndGlyphs">23</text></svg>
<svg class="a" style="left:448px;top:77px" width="10" height="8" viewBox="0 0 10 8"><path d="M1 2 L5 6 L9 2" stroke="#000" stroke-width="1.5" fill="none"/></svg>
<svg class="a" style="left:663px;top:77px" width="10" height="8" viewBox="0 0 10 8"><path d="M1 2 L5 6 L9 2" stroke="#000" stroke-width="1.5" fill="none"/></svg>
<svg class="a" style="left:852px;top:77px" width="10" height="8" viewBox="0 0 10 8"><path d="M1 2 L5 6 L9 2" stroke="#000" stroke-width="1.5" fill="none"/></svg>
<svg class="a" style="left:471px;top:54px" width="14" height="14" viewBox="0 0 14 14"><circle cx="5.8" cy="5.8" r="4.2" fill="none" stroke="#000" stroke-width="1.7"/><path d="M8.8 8.8 L12.5 12.5" stroke="#000" stroke-width="1.9"/></svg>
<svg class="a" style="left:471px;top:74px" width="14" height="13" viewBox="0 0 14 13"><path d="M1.5 1 L12.5 12 M12.5 1 L1.5 12" stroke="#000" stroke-width="1.3"/></svg>
<svg class="a" style="left:546px;top:114px" width="24" height="24" viewBox="0 0 24 24"><path d="M6.4 19.4 L6.4 15.7 L17.6 4.8 L20.9 8.4 L10.2 19.4 Z M15 8.4 L17.6 11.2" fill="none" stroke="#222" stroke-width="1.2" stroke-linejoin="round"/><line x1="4.2" y1="21.4" x2="22" y2="21.4" stroke="#222" stroke-width="1.3"/></svg>
<svg class="a" style="left:574px;top:114px" width="24" height="24" viewBox="0 0 24 24"><path d="M4.4 12.4 A7.4 7.4 0 0 1 18.3 8.8" fill="none" stroke="#0a7cff" stroke-width="1.5"/><path d="M18.6 5.1 L18.6 9.7 L14.1 9.7" fill="none" stroke="#0a7cff" stroke-width="1.5"/><path d="M19.4 14.5 A7.4 7.4 0 0 1 6 17.2" fill="none" stroke="#0a7cff" stroke-width="1.5"/><path d="M5.5 20.9 L5.5 16.5 L9.7 16.5" fill="none" stroke="#0a7cff" stroke-width="1.5"/></svg>
<svg class="a" style="left:605px;top:121px" width="13" height="12" viewBox="0 0 13 12"><path d="M1 0.5 L12 11.5 M12 0.5 L1 11.5" stroke="#111" stroke-width="1.2"/></svg>
<svg class="a" style="left:188px;top:150px" width="26" height="26" viewBox="0 0 26 26"><circle cx="11.1" cy="11.8" r="5.3" fill="none" stroke="#333" stroke-width="1.4"/><path d="M15 15.8 L20.4 21.2" stroke="#333" stroke-width="1.5"/></svg>
<svg class="a" style="left:219px;top:151px" width="24" height="24" viewBox="0 0 24 24"><path d="M4.4 12.4 A7.4 7.4 0 0 1 18.3 8.8" fill="none" stroke="#0a7cff" stroke-width="1.5"/><path d="M18.6 5.1 L18.6 9.7 L14.1 9.7" fill="none" stroke="#0a7cff" stroke-width="1.5"/><path d="M19.4 14.5 A7.4 7.4 0 0 1 6 17.2" fill="none" stroke="#0a7cff" stroke-width="1.5"/><path d="M5.5 20.9 L5.5 16.5 L9.7 16.5" fill="none" stroke="#0a7cff" stroke-width="1.5"/></svg>
<svg class="a" style="left:248px;top:150px" width="54" height="26" viewBox="0 0 54 26"><path d="M6.2 9.6 L9.3 12.6 L11.8 10.1 L8.7 7 A5.2 5.2 0 0 1 15.6 13.3 L20.3 18 A1.8 1.8 0 0 1 17.7 20.6 L13 15.9 A5.2 5.2 0 0 1 6.2 9.6 Z" fill="none" stroke="#333" stroke-width="1.25" stroke-linejoin="round"/><path d="M34.5 22.3 L34.5 5.5 L42.5 5.5 L47.8 10.9 L47.8 13.5 M42.5 5.5 L42.5 10.9 L47.8 10.9 M34.5 22.3 L46.8 22.3" fill="none" stroke="#222" stroke-width="1.2"/><text x="37.9" y="19.8" font-family="Liberation Sans" font-size="8" font-weight="bold" fill="#222" textLength="11.7" lengthAdjust="spacingAndGlyphs">XLS</text></svg>
<svg class="a" style="left:306px;top:150px" width="30" height="26" viewBox="0 0 30 26"><path d="M5.5 8 V19 M5.5 13.5 H8.5 V19 M10 13.5 H15 M12.5 13.5 V19 M16.3 19 V13.5 H20.6 V19 M18.45 13.5 V16 M23.6 8 V19" fill="none" stroke="#0a7cff" stroke-width="1.25"/></svg>
<svg class="a" style="left:354px;top:151px" width="24" height="24" viewBox="0 0 24 24"><path d="M4.4 12.4 A7.4 7.4 0 0 1 18.3 8.8" fill="none" stroke="#ff2d2d" stroke-width="1.5"/><path d="M18.6 5.1 L18.6 9.7 L14.1 9.7" fill="none" stroke="#ff2d2d" stroke-width="1.5"/><path d="M19.4 14.5 A7.4 7.4 0 0 1 6 17.2" fill="none" stroke="#0a7cff" stroke-width="1.5"/><path d="M5.5 20.9 L5.5 16.5 L9.7 16.5" fill="none" stroke="#0a7cff" stroke-width="1.5"/></svg>
<svg class="a" style="left:352px;top:150px" width="58" height="26" viewBox="0 0 58 26"><rect x="38" y="5" width="12" height="3.8" fill="#a855dc"/><path d="M34.2 12.2 Q34.2 10.2 36.2 10.2 L51.9 10.2 Q53.9 10.2 53.9 12.2 L53.9 18.9 L50 18.9 L50 22.8 L38 22.8 L38 18.9 L34.2 18.9 Z" fill="#a855dc"/><rect x="40.1" y="16.2" width="7.8" height="4.5" fill="#f0f0f0"/><rect x="50.2" y="12.2" width="1.7" height="1.7" fill="#d8b0f0"/></svg>
<svg class="a" style="left:6px;top:268px" width="30" height="24" viewBox="0 0 30 24"><rect x="9" y="0" width="10" height="10" fill="#a0953a"/><rect x="9" y="0" width="3" height="10" fill="#8c8230"/><rect x="14" y="0" width="1" height="10" fill="#b4a848"/><rect x="21" y="3" width="5" height="1.5" fill="#c8b440"/><rect x="17.5" y="4.5" width="11.5" height="18.5" fill="#d8d4d4"/><rect x="18" y="5" width="10" height="3" fill="#eeeeee"/><rect x="20" y="8" width="3" height="2" fill="#888"/><rect x="24" y="6" width="2" height="3" fill="#666"/><rect x="19" y="11" width="2" height="8" fill="#c83a3a"/><rect x="23" y="12" width="2.5" height="9" fill="#d03a3a"/><rect x="26" y="9" width="2" height="6" fill="#c83030"/><rect x="21" y="6" width="1.5" height="3" fill="#333"/><rect x="25.5" y="5.5" width="1.5" height="3" fill="#222"/><rect x="22" y="16" width="1.2" height="2" fill="#222"/><rect x="27" y="18" width="1.5" height="2" fill="#444"/><rect x="0.5" y="9.5" width="18" height="12" fill="#dcd8d8"/><rect x="1" y="10" width="5" height="11" fill="#e8e8e8"/><rect x="2" y="13" width="3" height="1" fill="#999"/><rect x="2" y="17" width="3" height="1" fill="#aaa"/><rect x="0.5" y="12" width="1.5" height="5" fill="#a89a30"/><rect x="7" y="13" width="4" height="4" fill="#d03636"/><rect x="11" y="12" width="4" height="6" fill="#c82a2a"/><rect x="14" y="10" width="3" height="4" fill="#d83a3a"/><rect x="9" y="18" width="3" height="2" fill="#c84040"/><rect x="5" y="10" width="1.5" height="2" fill="#222"/><rect x="5" y="13" width="1.5" height="1.5" fill="#222"/><rect x="5" y="18" width="2" height="1.5" fill="#222"/><rect x="13" y="17" width="1.5" height="1.5" fill="#222"/><rect x="8" y="11" width="1.5" height="1" fill="#333"/></svg>
<svg class="a" style="left:6px;top:298px" width="30" height="24" viewBox="0 0 30 24"><rect x="9" y="0" width="10" height="10" fill="#a0953a"/><rect x="9" y="0" width="3" height="10" fill="#8c8230"/><rect x="14" y="0" width="1" height="10" fill="#b4a848"/><rect x="21" y="3" width="5" height="1.5" fill="#c8b440"/><rect x="17.5" y="4.5" width="11.5" height="18.5" fill="#d8d4d4"/><rect x="18" y="5" width="10" height="3" fill="#eeeeee"/><rect x="20" y="8" width="3" height="2" fill="#888"/><rect x="24" y="6" width="2" height="3" fill="#666"/><rect x="19" y="11" width="2" height="8" fill="#c83a3a"/><rect x="23" y="12" width="2.5" height="9" fill="#d03a3a"/><rect x="26" y="9" width="2" height="6" fill="#c83030"/><rect x="21" y="6" width="1.5" height="3" fill="#333"/><rect x="25.5" y="5.5" width="1.5" height="3" fill="#222"/><rect x="22" y="16" width="1.2" height="2" fill="#222"/><rect x="27" y="18" width="1.5" height="2" fill="#444"/><rect x="0.5" y="9.5" width="18" height="12" fill="#dcd8d8"/><rect x="1" y="10" width="5" height="11" fill="#e8e8e8"/><rect x="2" y="13" width="3" height="1" fill="#999"/><rect x="2" y="17" width="3" height="1" fill="#aaa"/><rect x="0.5" y="12" width="1.5" height="5" fill="#a89a30"/><rect x="7" y="13" width="4" height="4" fill="#d03636"/><rect x="11" y="12" width="4" height="6" fill="#c82a2a"/><rect x="14" y="10" width="3" height="4" fill="#d83a3a"/><rect x="9" y="18" width="3" height="2" fill="#c84040"/><rect x="5" y="10" width="1.5" height="2" fill="#222"/><rect x="5" y="13" width="1.5" height="1.5" fill="#222"/><rect x="5" y="18" width="2" height="1.5" fill="#222"/><rect x="13" y="17" width="1.5" height="1.5" fill="#222"/><rect x="8" y="11" width="1.5" height="1" fill="#333"/></svg>
<svg class="a" style="left:6px;top:364px" width="29" height="19" viewBox="0 0 29 19"><rect x="0" y="0" width="29" height="19" fill="#a9a6aa"/><path d="M0 0 H29 V14 L24 17 V19 H29 V13 Z" fill="#a9a6aa"/><rect x="0" y="0" width="29" height="6" fill="#a8d6d4"/><path d="M0 6 L29 3 V12 L20 12.5 L10 11.5 L0 9 Z" fill="#8ec4c0"/><path d="M0 6.5 L29 4 M0 8.5 L29 6 M5 10.5 L29 8 M14 12 L29 10.5" stroke="#cfc0c0" stroke-width="0.8"/><path d="M2 9 L8 8 M12 7 L18 6.5 M22 5.5 L28 5 M6 10.5 L12 10 M18 9.5 L24 9 M10 12 L16 11.5 M24 11 L28 10.5" stroke="#123c3c" stroke-width="1.2"/><path d="M23 19 L29 14 V19 Z" fill="#3a7a72"/><rect x="24" y="15" width="2" height="2" fill="#123030"/><path d="M0 9 L10 11.5 L20 12.5" stroke="#444" stroke-width="1" fill="none"/></svg>
<svg class="a" style="left:6px;top:394px" width="29" height="19" viewBox="0 0 29 19"><rect x="0" y="0" width="29" height="19" fill="#a9a6aa"/><path d="M0 0 H29 V14 L24 17 V19 H29 V13 Z" fill="#a9a6aa"/><rect x="0" y="0" width="29" height="6" fill="#a8d6d4"/><path d="M0 6 L29 3 V12 L20 12.5 L10 11.5 L0 9 Z" fill="#8ec4c0"/><path d="M0 6.5 L29 4 M0 8.5 L29 6 M5 10.5 L29 8 M14 12 L29 10.5" stroke="#cfc0c0" stroke-width="0.8"/><path d="M2 9 L8 8 M12 7 L18 6.5 M22 5.5 L28 5 M6 10.5 L12 10 M18 9.5 L24 9 M10 12 L16 11.5 M24 11 L28 10.5" stroke="#123c3c" stroke-width="1.2"/><path d="M23 19 L29 14 V19 Z" fill="#3a7a72"/><rect x="24" y="15" width="2" height="2" fill="#123030"/><path d="M0 9 L10 11.5 L20 12.5" stroke="#444" stroke-width="1" fill="none"/></svg>
<svg class="a" style="left:7px;top:421px" width="38" height="27" viewBox="0 0 38 27"><rect x="5" y="0" width="33" height="10" fill="#ececee"/><rect x="5" y="0" width="33" height="3.5" fill="#d9d9db"/><rect x="5" y="6" width="33" height="2" fill="#f8f8f8"/><path d="M0 9.5 L3 8.5 L12 9 L24 10 L38 8.5 V26.5 H0 Z" fill="#d3d4de"/><path d="M0.5 9.5 L3 8.5 L12 9 L24 10 L38 8.5 V14.5 L24 21 Z" fill="#c9b8a4"/><path d="M24 21 L38 14.5 V26.5 H24 Z" fill="#e8e8ea"/><circle cx="12" cy="7.5" r="1" fill="#222"/><path d="M13 9 L17 10.5 L20 11" stroke="#665" stroke-width="1"/></svg>
<svg class="a" style="left:6px;top:453px" width="29" height="17" viewBox="0 0 29 17"><path d="M0 0 H29 V5 L22 6.5 L11 8.5 L0 5.5 Z" fill="#8a7a58"/><path d="M0 5 L11 8.5 L17 9 L10 12 L3 15 L0 15.5 Z" fill="#35393a"/><path d="M1 8 L4 7.5 M2 11 L6 10 M6 9 L9 9.5 M1 13 L4 12.5" stroke="#6a7278" stroke-width="1"/><path d="M11 8.5 L22 6 L29 4.5 V10.5 L24 13.5 L18 12.5 L14 11 Z" fill="#c4c0a4"/><path d="M14 10 L18 9 M20 8 L24 7 M22 11 L27 9.5" stroke="#eeeedf" stroke-width="1"/><path d="M15 11.5 L18 12.5 L22 13.5" stroke="#5a5a48" stroke-width="0.8"/></svg>
<svg class="a" style="left:6px;top:483px" width="29" height="17" viewBox="0 0 29 17"><path d="M0 0 H29 V5 L22 6.5 L11 8.5 L0 5.5 Z" fill="#8a7a58"/><path d="M0 5 L11 8.5 L17 9 L10 12 L3 15 L0 15.5 Z" fill="#35393a"/><path d="M1 8 L4 7.5 M2 11 L6 10 M6 9 L9 9.5 M1 13 L4 12.5" stroke="#6a7278" stroke-width="1"/><path d="M11 8.5 L22 6 L29 4.5 V10.5 L24 13.5 L18 12.5 L14 11 Z" fill="#c4c0a4"/><path d="M14 10 L18 9 M20 8 L24 7 M22 11 L27 9.5" stroke="#eeeedf" stroke-width="1"/><path d="M15 11.5 L18 12.5 L22 13.5" stroke="#5a5a48" stroke-width="0.8"/></svg>
<svg class="a" style="left:6px;top:513px" width="29" height="17" viewBox="0 0 29 17"><path d="M0 0 H29 V5 L22 6.5 L11 8.5 L0 5.5 Z" fill="#8a7a58"/><path d="M0 5 L11 8.5 L17 9 L10 12 L3 15 L0 15.5 Z" fill="#35393a"/><path d="M1 8 L4 7.5 M2 11 L6 10 M6 9 L9 9.5 M1 13 L4 12.5" stroke="#6a7278" stroke-width="1"/><path d="M11 8.5 L22 6 L29 4.5 V10.5 L24 13.5 L18 12.5 L14 11 Z" fill="#c4c0a4"/><path d="M14 10 L18 9 M20 8 L24 7 M22 11 L27 9.5" stroke="#eeeedf" stroke-width="1"/><path d="M15 11.5 L18 12.5 L22 13.5" stroke="#5a5a48" stroke-width="0.8"/></svg>
<svg class="a" style="left:6px;top:543px" width="29" height="17" viewBox="0 0 29 17"><path d="M0 0 H29 V5 L22 6.5 L11 8.5 L0 5.5 Z" fill="#8a7a58"/><path d="M0 5 L11 8.5 L17 9 L10 12 L3 15 L0 15.5 Z" fill="#35393a"/><path d="M1 8 L4 7.5 M2 11 L6 10 M6 9 L9 9.5 M1 13 L4 12.5" stroke="#6a7278" stroke-width="1"/><path d="M11 8.5 L22 6 L29 4.5 V10.5 L24 13.5 L18 12.5 L14 11 Z" fill="#c4c0a4"/><path d="M14 10 L18 9 M20 8 L24 7 M22 11 L27 9.5" stroke="#eeeedf" stroke-width="1"/><path d="M15 11.5 L18 12.5 L22 13.5" stroke="#5a5a48" stroke-width="0.8"/></svg>
<svg class="a" style="left:6px;top:573px" width="29" height="17" viewBox="0 0 29 17"><path d="M0 0 H29 V5 L22 6.5 L11 8.5 L0 5.5 Z" fill="#8a7a58"/><path d="M0 5 L11 8.5 L17 9 L10 12 L3 15 L0 15.5 Z" fill="#35393a"/><path d="M1 8 L4 7.5 M2 11 L6 10 M6 9 L9 9.5 M1 13 L4 12.5" stroke="#6a7278" stroke-width="1"/><path d="M11 8.5 L22 6 L29 4.5 V10.5 L24 13.5 L18 12.5 L14 11 Z" fill="#c4c0a4"/><path d="M14 10 L18 9 M20 8 L24 7 M22 11 L27 9.5" stroke="#eeeedf" stroke-width="1"/><path d="M15 11.5 L18 12.5 L22 13.5" stroke="#5a5a48" stroke-width="0.8"/></svg>
<svg class="a" style="left:945px;top:186px" width="12" height="10" viewBox="0 0 12 10"><path d="M3 7.2 L6.5 3.7 L10 7.2" fill="none" stroke="#606060" stroke-width="1.5"/></svg>
<svg class="a" style="left:945px;top:636px" width="12" height="10" viewBox="0 0 12 10"><path d="M3 3.5 L6.5 7 L10 3.5" fill="none" stroke="#606060" stroke-width="1.5"/></svg>
<div class="a" style="left:966px;top:0;width:1px;height:656px;background:#c8c8c8"></div>
<div class="a" style="left:967px;top:98px;width:1px;height:116px;background:#e4400c"></div>
<div class="a" style="left:967px;top:574px;width:1px;height:2px;background:#1a3a8a"></div>
</body></html>
